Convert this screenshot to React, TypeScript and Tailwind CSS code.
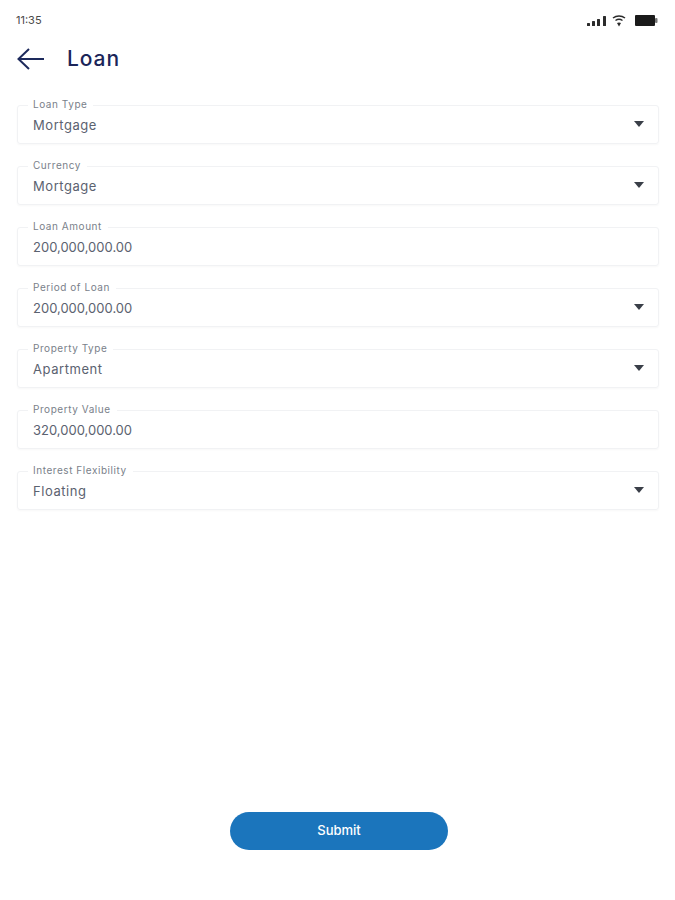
const fields = [
  { label: "Loan Type", value: "Mortgage", select: true },
  { label: "Currency", value: "Mortgage", select: true },
  { label: "Loan Amount", value: "200,000,000.00", select: false },
  { label: "Period of Loan", value: "200,000,000.00", select: true },
  { label: "Property Type", value: "Apartment", select: true },
  { label: "Property Value", value: "320,000,000.00", select: false },
  { label: "Interest Flexibility", value: "Floating", select: true },
];

function StatusIcons() {
  return (
    <div className="flex items-center gap-[6px]">
      <svg width="19" height="10" viewBox="0 0 19 10" fill="#2b2b2b">
        <rect x="0" y="7" width="3" height="3" rx="0.5" />
        <rect x="5" y="5" width="3" height="5" rx="0.5" />
        <rect x="10" y="3" width="3" height="7" rx="0.5" />
        <rect x="16" y="0" width="3" height="10" rx="0.5" />
      </svg>
      <svg width="14" height="12" viewBox="0 0 14 12" fill="none" stroke="#2b2b2b" strokeWidth="1.5">
        <path d="M1 3 C4.5 0.3 9.5 0.3 13 3" />
        <path d="M3.5 5.5 C5.5 4 8.5 4 10.5 5.5" />
        <path d="M7 11.5 L5 8 C6 7.3 8 7.3 9 8 Z" fill="#2b2b2b" stroke="none" />
      </svg>
      <svg width="23" height="11" viewBox="0 0 23 11" fill="#1a1a1a" className="ml-[3px]">
        <rect x="0" y="0" width="20" height="11" rx="1" />
        <rect x="20" y="3" width="2.5" height="5" rx="1" fill="#777777" />
      </svg>
    </div>
  );
}

function Field({ label, value, select }: { label: string; value: string; select: boolean }) {
  // digits run narrower than the words in the original font
  const numeric = /^\d/.test(value);
  return (
    <div className="relative h-[39px] rounded-[3px] border border-[#f1f2f4] shadow-[0_1px_2px_rgba(0,0,0,0.03)] pl-[15px] pr-[14px] flex items-center justify-between">
      <span className="absolute left-[10px] top-[-9px] bg-white pl-[5px] pr-[6px] text-[10px] leading-[14px] tracking-[0.55px] text-[#7a7f8a]">
        {label}
      </span>
      <span className={numeric ? "pt-[3px] text-[13px] text-[#5b6270]" : "pt-[3px] text-[13px] tracking-[0.55px] text-[#5b6270]"}>
        {value}
      </span>
      {select && <span className="w-0 h-0 border-x-[5px] border-x-transparent border-t-[6px] border-t-[#3a3f48] mt-[-2px]" />}
    </div>
  );
}

export default function App() {
  return (
    <div className="w-[675px] h-[900px] bg-white flex flex-col font-['Inter','Noto_Sans',sans-serif]">
      <div className="h-[41px] pl-4 pr-[17px] flex items-center justify-between">
        <span className="text-[11px] text-[#4a4a4a]">11:35</span>
        <StatusIcons />
      </div>
      <div className="h-[36px] pl-[17px] flex items-center gap-[23px]">
        <svg width="27" height="22" viewBox="0 0 27 22" fill="none" stroke="#1d2a5c" strokeWidth="2">
          <path d="M1.5 11 H27 M12 1 L1.5 11 L12 21" />
        </svg>
        <span className="text-[21px] font-medium tracking-[0.9px] text-[#1b2559]">Loan</span>
      </div>
      <div className="mt-[28px] pl-[17px] pr-4 flex flex-col gap-[22px]">
        {fields.map((f) => (
          <Field key={f.label} label={f.label} value={f.value} select={f.select} />
        ))}
      </div>
      <div className="mt-auto mb-[50px] pl-[3px] flex justify-center">
        <button className="w-[218px] h-[38px] rounded-full bg-[#1b75bc] text-[13px] font-medium text-white">
          Submit
        </button>
      </div>
    </div>
  );
}
